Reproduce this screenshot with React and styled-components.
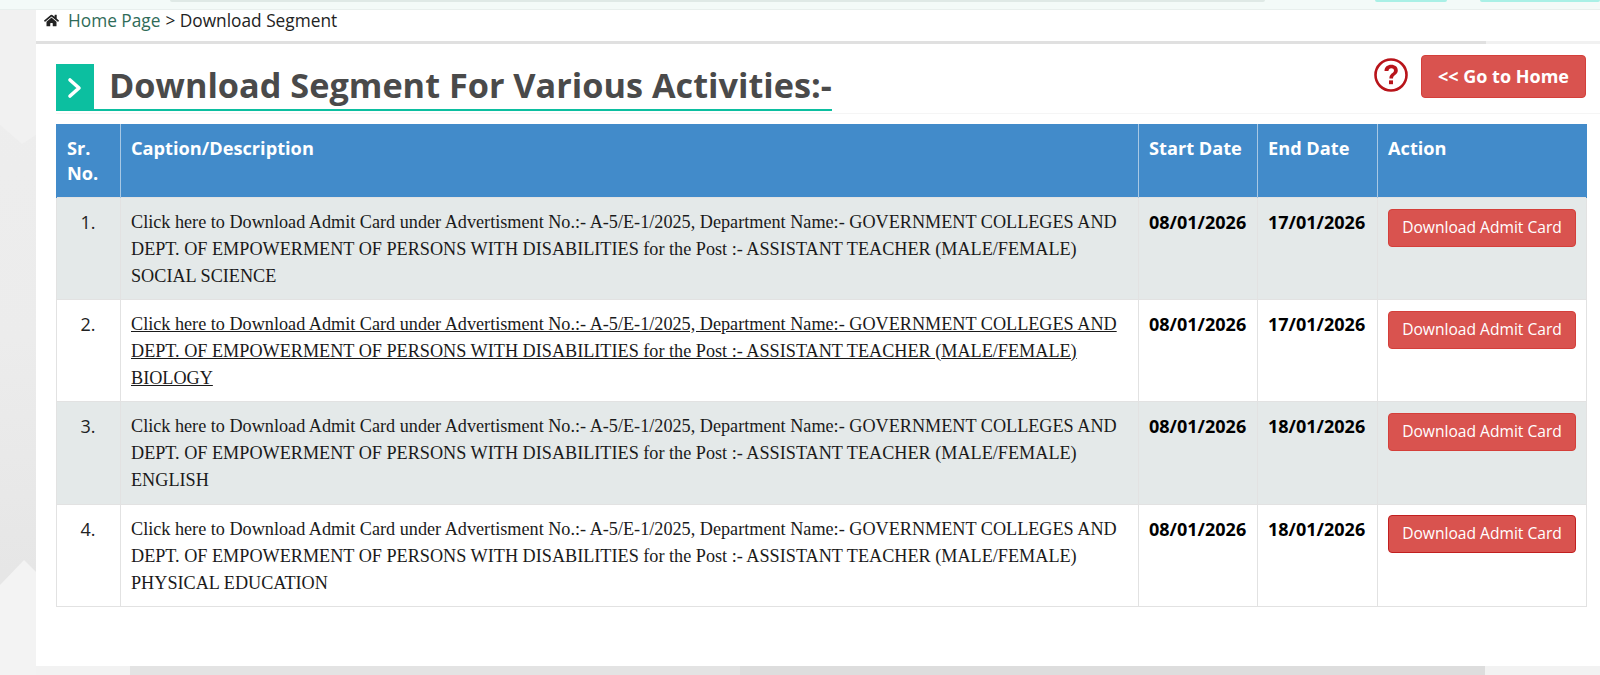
import React from "react";
import styled, { createGlobalStyle } from "styled-components";
import { FaHome } from "react-icons/fa";

const GlobalStyle = createGlobalStyle`
  html, body {
    margin: 0;
    padding: 0;
    height: 675px;
    overflow: hidden;
    background: #eeeeee;
    font-family: "Open Sans", sans-serif;
  }
`;

const Page = styled.div`
  position: relative;
  width: 1600px;
  height: 675px;
  background: linear-gradient(180deg, #eeeeee 0%, #ececec 50%, #e6e6e6 85%);
`;

const Backdrop = styled.svg`
  position: absolute;
  inset: 0;
  width: 1600px;
  height: 675px;
`;

const TopStrip = styled.div`
  position: relative;
  height: 9px;
  background: #f3faf8;
  border-bottom: 1px solid #e8efed;
`;

const StripPill = styled.span`
  position: absolute;
  top: 0;
  left: ${(p) => p.$left}px;
  width: ${(p) => p.$width}px;
  height: 2px;
  border-radius: 0 0 6px 6px;
  background: ${(p) => p.$color};
`;

const Panel = styled.main`
  position: relative;
  margin-left: 36px;
  width: 1564px;
  height: 656px;
  padding-top: 1px;
  box-sizing: border-box;
  background: #fff;
`;

const Breadcrumb = styled.nav`
  display: flex;
  align-items: center;
  height: 33px;
  padding: 0 0 12px 8px;
  box-sizing: border-box;
  font-size: 17.3px;
  color: #222;
  border-bottom: 3px solid #e2e2e2;
  border-image: linear-gradient(90deg, #e0e0e0 1449px, #f1f1f1 1449px) 1;
`;

const Crumb = styled.a`
  color: #2f6b58;
  margin-left: 9px;
  margin-right: 5px;
`;

const Head = styled.header`
  display: flex;
  justify-content: space-between;
  height: 70px;
  margin-left: 20px;
  padding-right: 14px;
  border-bottom: 1px solid #f5f5f5;
  box-sizing: border-box;
`;

const Title = styled.h1`
  display: flex;
  align-items: flex-start;
  margin: 20px 0 0;
  height: 47px;
  box-sizing: border-box;
  border-bottom: 2px solid #0cbfa0;
  font-size: 34.25px;
  line-height: 42px;
  font-weight: 700;
  color: #4a4a4a;
`;

const TitleMark = styled.span`
  display: flex;
  align-items: center;
  justify-content: center;
  width: 38px;
  height: 47px;
  margin-right: 15px;
  background: #0cbfa0;
`;

const HeadActions = styled.div`
  display: flex;
  align-items: flex-start;
  gap: 13px;
  padding-top: 11px;
`;

const HelpIcon = styled.svg`
  width: 34px;
  height: 34px;
  margin-top: 3px;
`;

const Button = styled.a`
  display: inline-block;
  box-sizing: border-box;
  border-radius: 4px;
  background: #d9534f;
  border: 1px solid ${(p) => (p.$dark ? "#c11f1f" : "#d43f3a")};
  color: #fff;
  text-align: center;
  white-space: nowrap;
`;

const HomeButton = styled(Button)`
  width: 165px;
  height: 43px;
  line-height: 41px;
  font-size: 18px;
  font-weight: 700;
`;

const Table = styled.table`
  margin: 10px 0 0 20px;
  width: 1530px;
  border-collapse: collapse;
  table-layout: fixed;
`;

const Th = styled.th`
  background: #428bca;
  color: #fff;
  border: 1px solid #a8c8e4;
  border-top: 0;
  border-bottom: 0;
  padding: 11.5px 10px 0;
  height: 73px;
  box-sizing: border-box;
  text-align: left;
  vertical-align: top;
  font-size: 18.2px;
  line-height: 25.7px;
  font-weight: 700;
  &:first-child { border-left-color: #428bca; }
  &:last-child { border-right-color: #428bca; }
`;

const Tr = styled.tr`
  background: ${(p) => (p.$alt ? "#e4e9e9" : "#fff")};
  & > td { height: ${(p) => p.$h}px; }
`;

const Td = styled.td`
  border: 1px solid #e2e2e2;
  padding: 10px;
  box-sizing: border-box;
  vertical-align: top;
  font-size: 18px;
  line-height: 26px;
  color: #111;
`;

const NumCell = styled(Td)`
  text-align: center;
  padding-top: 11px;
  padding-right: 11px;
  font-size: 18px;
  color: #222;
`;

const DateCell = styled(Td)`
  padding-top: 11px;
  font-weight: 700;
  color: #000;
`;

const Caption = styled.a`
  font-family: "Liberation Serif", serif;
  font-size: 18.2px;
  color: #1a1a1a;
  text-decoration: ${(p) => (p.$hover ? "underline" : "none")};
`;

const DownloadButton = styled(Button)`
  display: block;
  width: 188px;
  height: 38px;
  line-height: 34px;
  margin-top: ${(p) => (p.$dark ? 0 : 1)}px;
  font-size: 15.6px;
`;

const caption =
  "Click here to Download Admit Card under Advertisment No.:- A-5/E-1/2025, Department Name:- GOVERNMENT COLLEGES AND DEPT. OF EMPOWERMENT OF PERSONS WITH DISABILITIES for the Post :- ASSISTANT TEACHER (MALE/FEMALE) ";

const rows = [
  { subject: "SOCIAL SCIENCE", end: "17/01/2026", h: 102 },
  { subject: "BIOLOGY", end: "17/01/2026", h: 102, hover: true },
  { subject: "ENGLISH", end: "18/01/2026", h: 103 },
  { subject: "PHYSICAL EDUCATION", end: "18/01/2026", h: 102, focus: true },
];

export default function App() {
  return (
    <Page>
      <GlobalStyle />
      <Backdrop viewBox="0 0 1600 675">
        <polygon points="0,125 22,144 36,135 36,0 0,0" fill="#f1f1f1" />
        <polygon points="0,585 24,560 36,572 36,675 0,675" fill="#f3f3f3" />
        <rect x="36" y="666" width="94" height="9" fill="#f2f2f2" />
        <rect x="130" y="666" width="610" height="9" fill="#e3e3e3" />
        <rect x="740" y="666" width="745" height="9" fill="#dddddd" />
        <rect x="1485" y="666" width="115" height="9" fill="#f2f2f2" />
      </Backdrop>
      <TopStrip>
        <StripPill $left={170} $width={1095} $color="#dfe9e6" />
        <StripPill $left={1375} $width={72} $color="#a9f0e6" />
        <StripPill $left={1480} $width={120} $color="#a9f0e6" />
      </TopStrip>
      <Panel>
        <Breadcrumb>
          <FaHome size={15} />
          <Crumb>Home Page</Crumb>
          {"> Download Segment"}
        </Breadcrumb>
        <Head>
          <Title>
            <TitleMark>
              <svg width="16" height="22" viewBox="0 0 16 22">
                <polyline
                  points="3,3 12,11 3,19"
                  fill="none"
                  stroke="#fff"
                  strokeWidth="3.6"
                  strokeLinecap="round"
                  strokeLinejoin="round"
                />
              </svg>
            </TitleMark>
            Download Segment For Various Activities:-
          </Title>
          <HeadActions>
            <HelpIcon viewBox="0 0 34 34">
              <circle cx="17" cy="17" r="15.5" fill="none" stroke="#b8141a" strokeWidth="2.6" />
              <path d="M10.5 13c0-4 3-6.2 6.7-6.2 3.9 0 6.6 2.2 6.6 5.6 0 4.4-4.8 4.4-4.8 8h-3.6c0-5.2 4.6-5 4.6-7.9 0-1.4-1.2-2.3-2.7-2.3-1.7 0-2.8 1.1-2.9 2.8z" fill="#b8141a" />
              <rect x="15" y="22.4" width="4" height="3.8" fill="#b8141a" />
            </HelpIcon>
            <HomeButton>{"<< Go to Home"}</HomeButton>
          </HeadActions>
        </Head>
        <Table>
          <colgroup>
            <col style={{ width: 64 }} />
            <col style={{ width: 1018 }} />
            <col style={{ width: 119 }} />
            <col style={{ width: 120 }} />
            <col style={{ width: 209 }} />
          </colgroup>
          <thead>
            <tr>
              <Th>Sr. No.</Th>
              <Th>Caption/Description</Th>
              <Th>Start Date</Th>
              <Th>End Date</Th>
              <Th>Action</Th>
            </tr>
          </thead>
          <tbody>
            {rows.map((row, i) => (
              <Tr key={row.subject} $alt={i % 2 === 0} $h={row.h}>
                <NumCell>{i + 1}.</NumCell>
                <Td>
                  <Caption $hover={row.hover}>
                    {caption}
                    {row.subject}
                  </Caption>
                </Td>
                <DateCell>08/01/2026</DateCell>
                <DateCell>{row.end}</DateCell>
                <Td>
                  <DownloadButton $dark={row.focus}>Download Admit Card</DownloadButton>
                </Td>
              </Tr>
            ))}
          </tbody>
        </Table>
      </Panel>
    </Page>
  );
}
